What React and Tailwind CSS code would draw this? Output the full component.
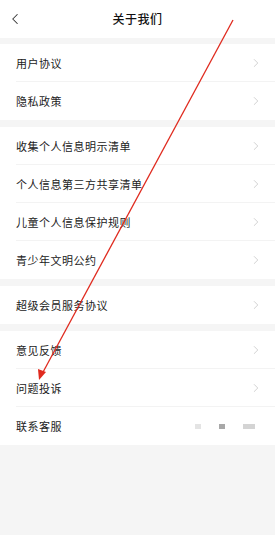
import { ChevronLeft, ChevronRight } from "lucide-react";

const sections = [
  ["用户协议", "隐私政策"],
  ["收集个人信息明示清单", "个人信息第三方共享清单", "儿童个人信息保护规则", "青少年文明公约"],
  ["超级会员服务协议"],
];

function Row({ label, last, children }) {
  return (
    <div className="relative flex h-[38px] items-center bg-white pl-4 pr-3">
      <span className="flex-1 text-[11px] tracking-[0.5px] text-[#222]">{label}</span>
      {children || <ChevronRight size={14} strokeWidth={1.3} className="text-[#c4c4c4]" />}
      {!last && <div className="absolute bottom-0 left-4 right-0 h-px bg-[#f3f3f3]" />}
    </div>
  );
}

export default function App() {
  return (
    <div
      className="relative min-h-[535px] w-[275px] bg-[#f5f5f5]"
      style={{ fontFamily: '"Noto Sans CJK SC", "Noto Sans", sans-serif' }}
    >
      <div className="relative flex h-[38px] items-center justify-center bg-white">
        <ChevronLeft size={18} strokeWidth={1.4} className="absolute left-[6px] text-[#333]" />
        <span className="text-[12px] font-medium tracking-[0.5px] text-[#111]">关于我们</span>
      </div>

      <div className="flex flex-col gap-[7px] pt-[6px]">
        {sections.map((items, i) => (
          <div key={i}>
            {items.map((label, j) => (
              <Row key={label} label={label} last={j === items.length - 1} />
            ))}
          </div>
        ))}
        <div>
          <Row label="意见反馈" />
          <Row label="问题投诉" />
          <Row label="联系客服" last>
            <div className="mr-2 flex items-center gap-[18px]">
              <div className="h-[5px] w-[6px] bg-[#e4e4e4]" />
              <div className="h-[5px] w-[6px] bg-[#a8a8a8]" />
              <div className="h-[5px] w-[12px] bg-[#d4d4d4]" />
            </div>
          </Row>
        </div>
      </div>

      <svg className="pointer-events-none absolute left-0 top-0" width="275" height="535">
        <line x1="233" y1="20" x2="42" y2="374" stroke="#e02a1e" strokeWidth="1.3" />
        <polygon points="39,380 38,369 46,372" fill="#e02a1e" />
      </svg>
    </div>
  );
}
